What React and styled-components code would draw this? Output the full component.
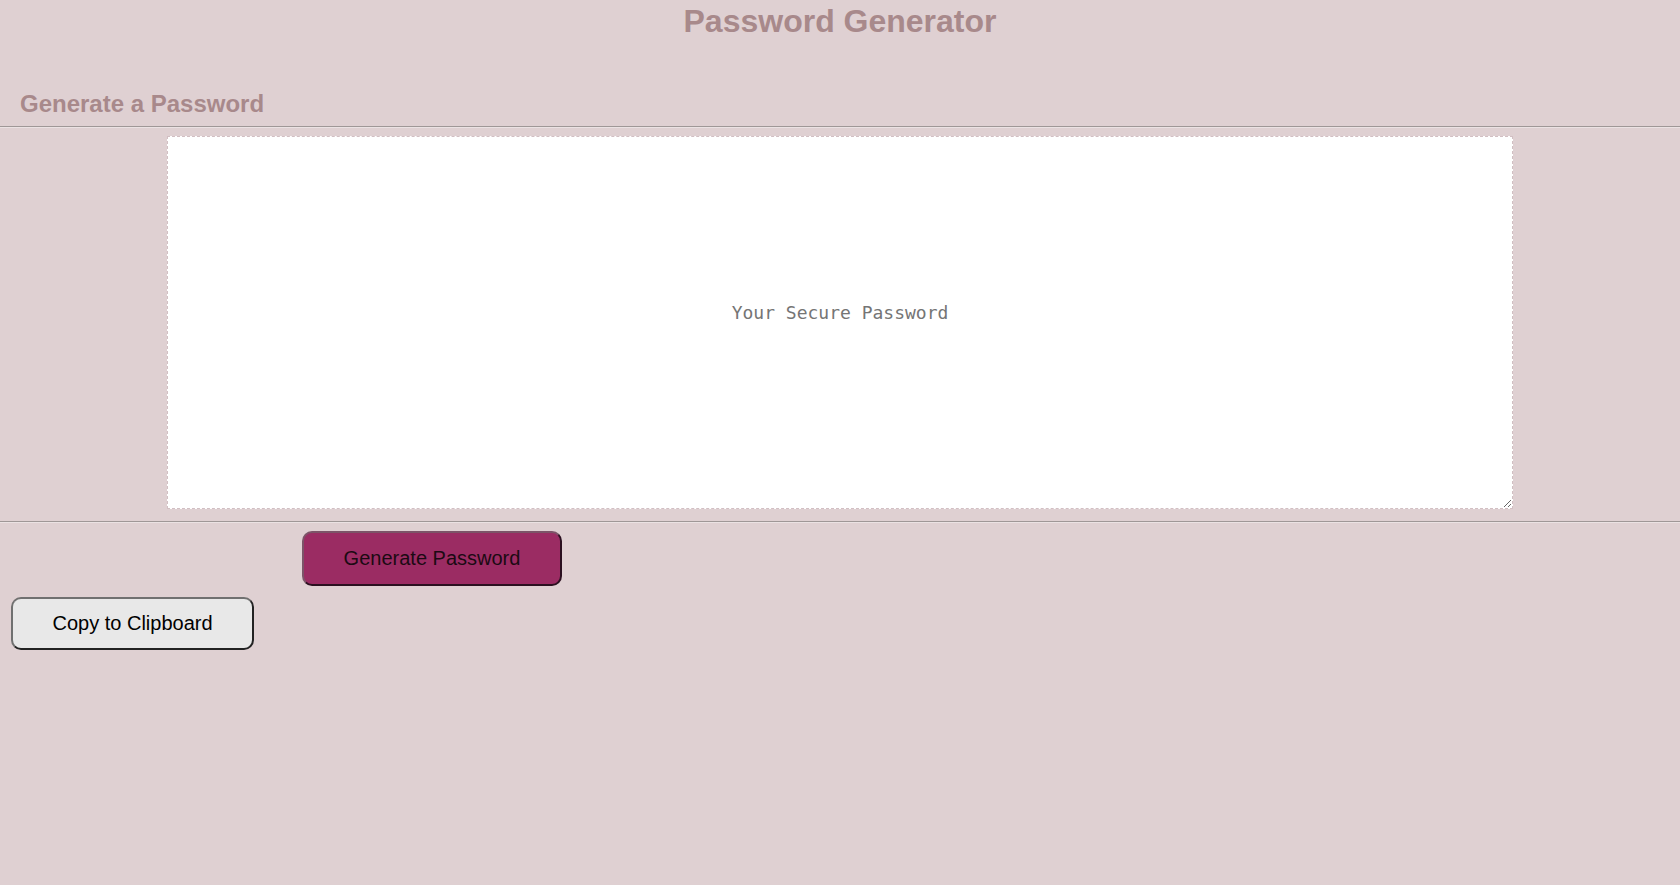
import React, { Component } from 'react';
import styled, { createGlobalStyle } from 'styled-components';

class App extends Component {
  render() {
    return (
      <Page>
        <GlobalStyle />
        <Title>Password Generator</Title>
        <Card>
          <CardHeader>
            <Subtitle>Generate a Password</Subtitle>
          </CardHeader>
          <Divider />
          <CardBody>
            <PasswordBox readOnly placeholder="Your Secure Password" aria-label="Generated Password" />
          </CardBody>
          <Divider />
          <CardFooter>
            <Button primary>Generate Password</Button>
            <Button>Copy to Clipboard</Button>
          </CardFooter>
        </Card>
      </Page>
    );
  }
}

export default App;

const GlobalStyle = createGlobalStyle`
  html,
  body {
    margin: 0;
    padding: 0;
    background-color: #dfd0d2;
    min-height: 100%;
  }

  body {
    font-family: 'Liberation Sans', Arial, sans-serif;
  }
`;

const Page = styled.div`
  margin: 0;
  padding: 3px 0 0;
  box-sizing: border-box;
  min-height: 885px;
  background-color: #dfd0d2;
`;

const Title = styled.h1`
  margin: 0;
  padding: 0;
  font-family: 'Liberation Sans', Arial, sans-serif;
  font-weight: 700;
  font-size: 32px;
  text-align: center;
  color: #a8898b;
`;

const Card = styled.section`
  margin: 50px 0 0;
  padding: 0;
  box-sizing: border-box;
`;

const CardHeader = styled.header`
  margin: 0;
  padding: 0 0 8px 20px;
`;

const Subtitle = styled.h2`
  margin: 0;
  padding: 0;
  font-family: 'Liberation Sans', Arial, sans-serif;
  font-weight: 700;
  font-size: 24px;
  color: #a8898b;
`;

const Divider = styled.hr`
  margin: 0;
  height: 0;
  border: 0;
  border-top: 1px solid #9f9797;
  border-bottom: 1px solid #ebe2e3;
`;

const CardBody = styled.div`
  margin: 0;
  padding: 8px 0 12px;
`;

const PasswordBox = styled.textarea`
  display: block;
  margin: 0 auto;
  width: calc(80% + 2px);
  height: 373px;
  box-sizing: border-box;
  padding: 165px 10px 0;
  border: 1px dashed #d2bfc3;
  background-color: #fff;
  font-family: 'DejaVu Sans Mono', 'Liberation Mono', monospace;
  font-size: 18px;
  text-align: center;
  color: #555;
  outline: none;

  &::placeholder {
    color: #757575;
  }
`;

const CardFooter = styled.footer`
  margin: 0;
  padding: 8px 0 0;
  display: flex;
  flex-direction: column;
  align-items: flex-start;
  gap: 11px;
`;

const Button = styled.button`
  margin: 0 0 0 ${props => (props.primary ? '302px' : '11px')};
  width: ${props => (props.primary ? '260px' : '243px')};
  height: ${props => (props.primary ? '55px' : '53px')};
  box-sizing: border-box;
  padding: 0;
  border: 2px solid;
  border-radius: 10px;
  border-color: ${props =>
    props.primary ? '#7c5468 #2b1020 #2b1020 #7c5468' : '#707070 #222 #222 #707070'};
  background-color: ${props => (props.primary ? '#9b2c63' : '#e8e8e8')};
  font-family: 'Liberation Sans', Arial, sans-serif;
  font-size: 20px;
  color: ${props => (props.primary ? '#1c0a13' : '#000')};
  cursor: pointer;
`;
